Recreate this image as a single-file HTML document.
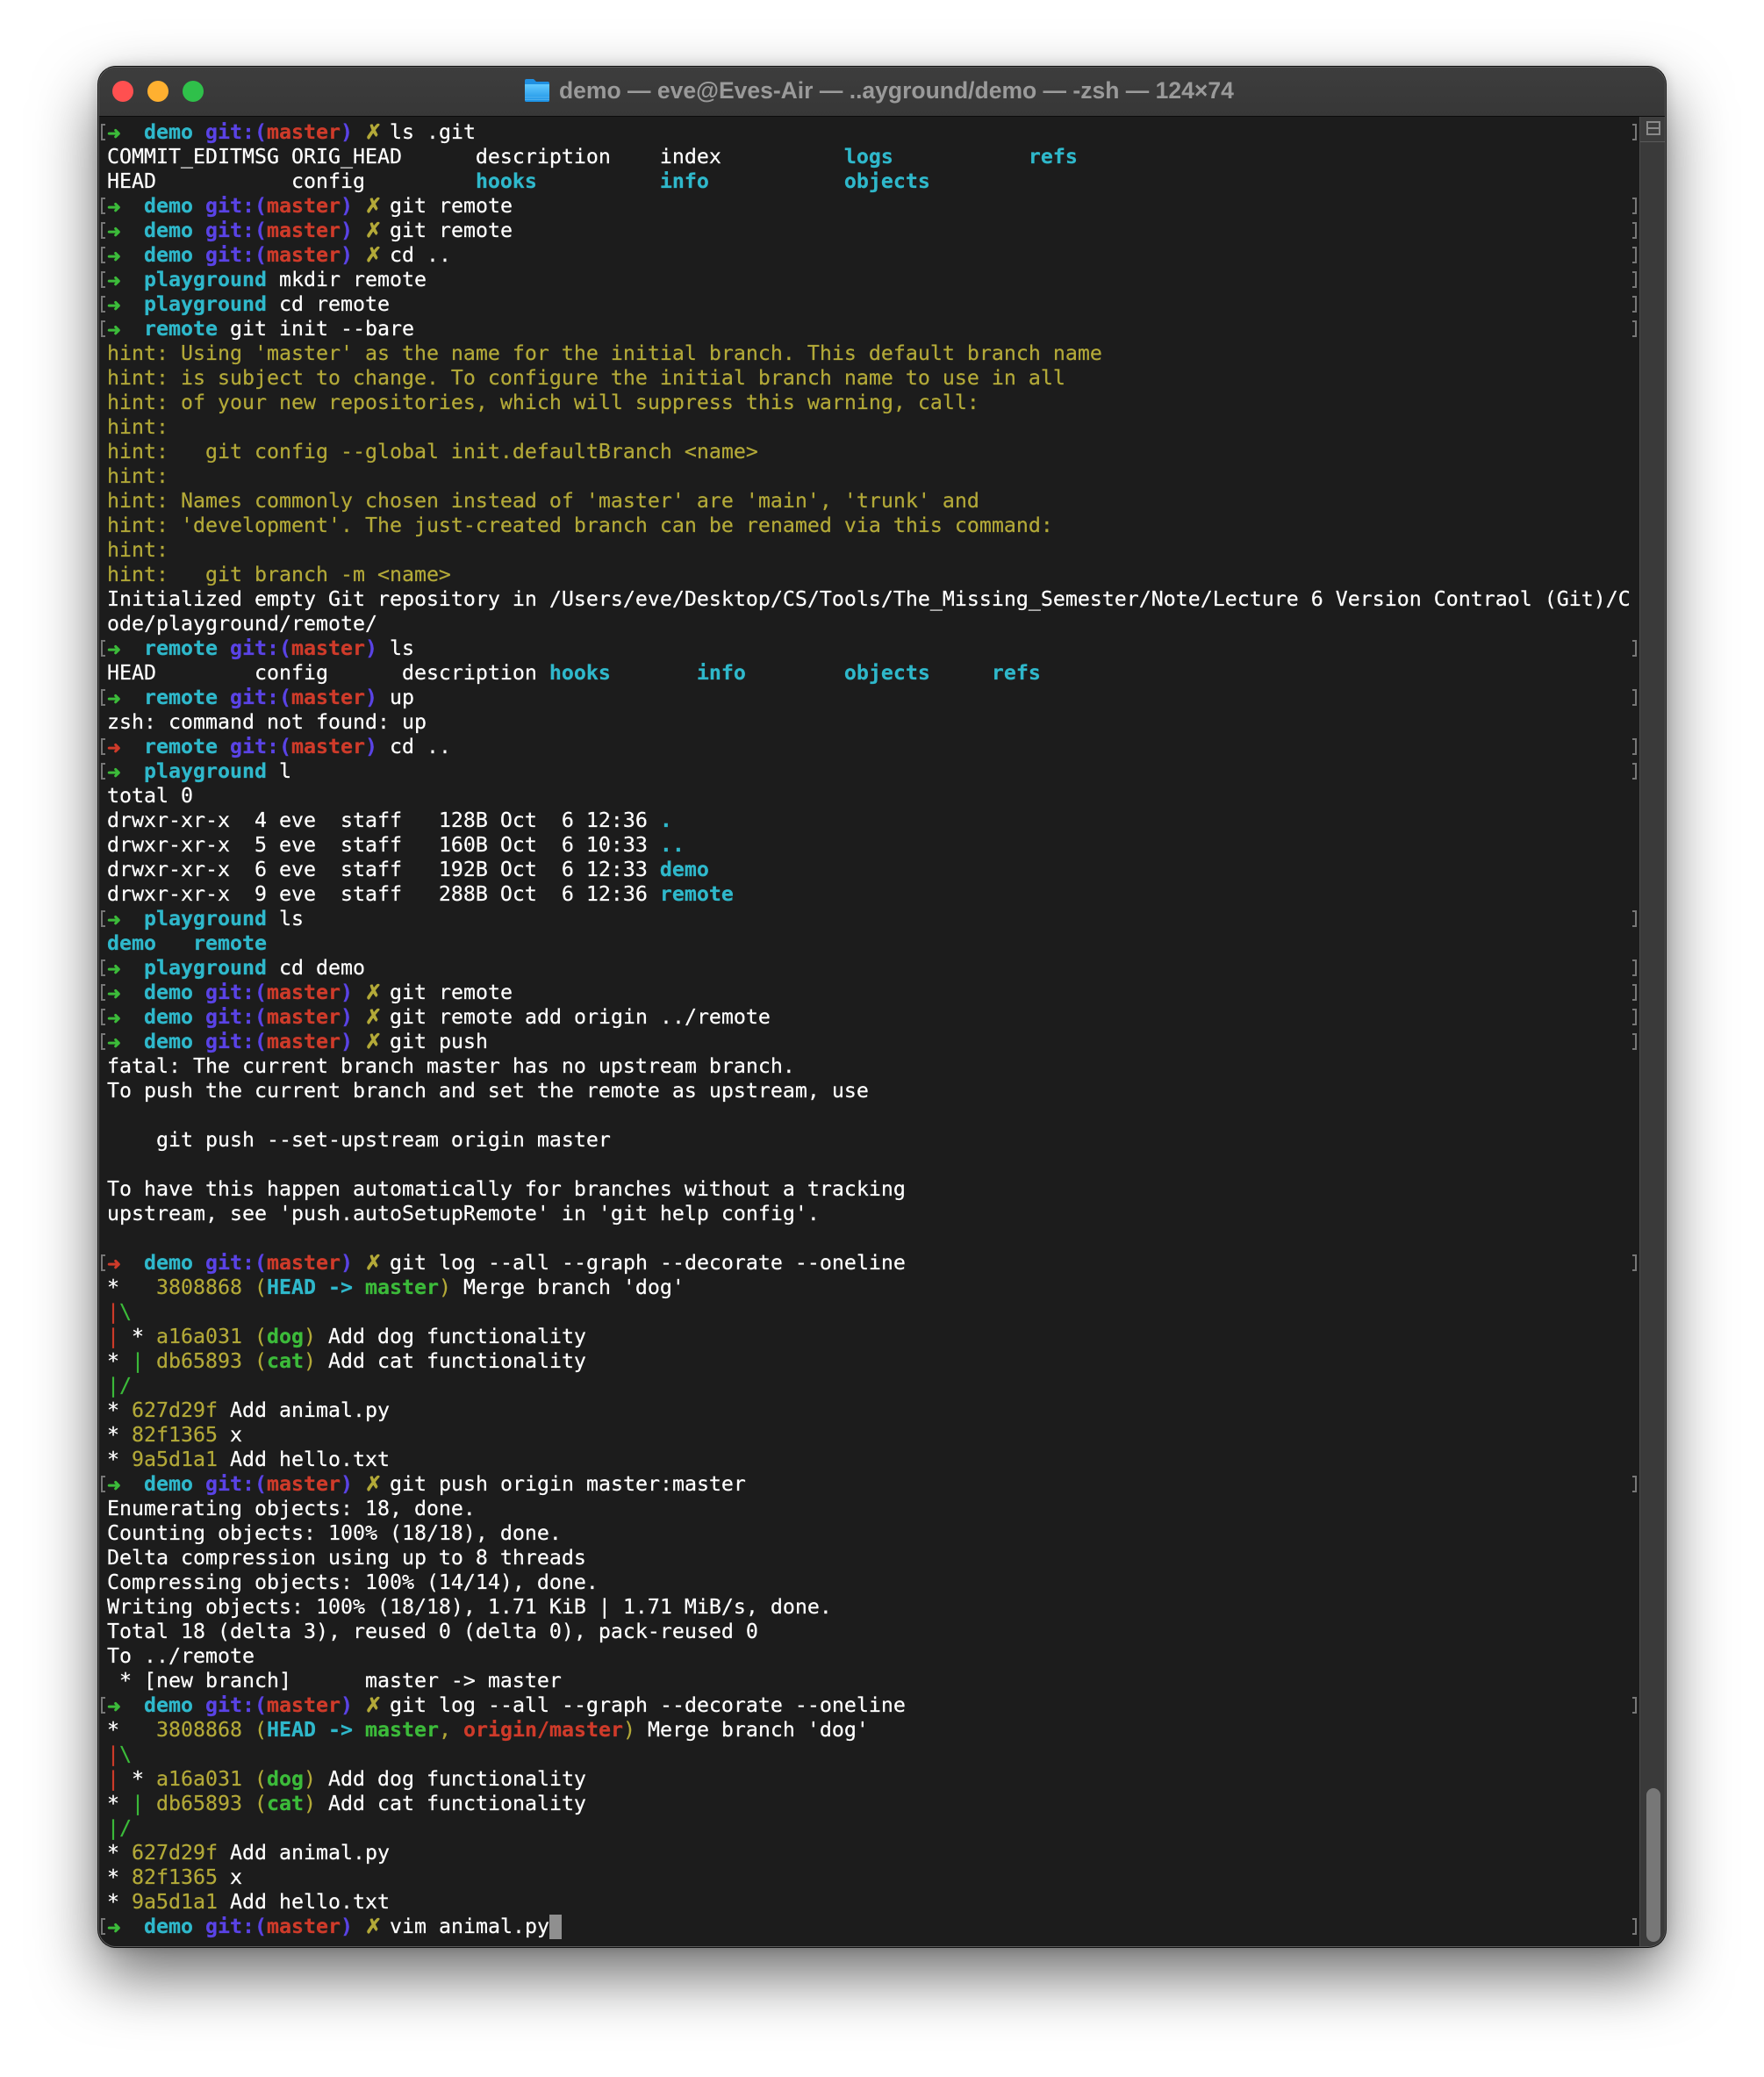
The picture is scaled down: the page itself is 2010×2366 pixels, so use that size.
<!DOCTYPE html>
<html>
<head>
<meta charset="utf-8">
<style>
html,body{margin:0;padding:0;width:2010px;height:2366px;background:#fff;overflow:hidden}
#win{position:absolute;left:112px;top:76px;width:1786px;height:2142px;box-sizing:border-box;border-radius:20px;background:#1c1c1c;box-shadow:0 0 0 1px #111,0 32px 72px rgba(0,0,0,.58),0 0 14px rgba(0,0,0,.18);overflow:hidden;border:1px solid #5a5a5a}
#bar{position:absolute;left:0;top:0;right:0;height:55px;background:linear-gradient(#3d3d3d,#373737);border-bottom:1px solid #0c0c0c}
.dot{position:absolute;top:15px;width:24px;height:24px;border-radius:50%}
#title{position:absolute;left:524px;top:8px;font:bold 26.5px/36px "Liberation Sans",sans-serif;color:#9a9a9a;white-space:pre}
#folder{position:absolute;left:484px;top:12px}
#side{position:absolute;left:1755px;top:56px;width:31px;bottom:0;background:#3a3a3a;border-left:1px solid #4b4b4b}
#sidebox{position:absolute;left:0;top:0;right:0;height:28px;border-bottom:1px solid #5a5a5a;background:#3d3d3d}
#sideicon{position:absolute;left:7px;top:5px;width:12px;height:12px;border:2px solid #8a8a8a;background:linear-gradient(#3d3d3d 5px,#8a8a8a 5px,#8a8a8a 7px,#3d3d3d 7px)}
#thumb{position:absolute;left:7px;top:1904px;width:16px;height:175px;border-radius:8px;background:#777}
#t{position:absolute;left:9px;top:60px;font-family:"DejaVu Sans Mono","Liberation Mono",monospace;font-size:23.26px;line-height:28px;color:#fff;-webkit-text-stroke-width:.2px}
.l{position:relative;height:28px;width:1736px;white-space:pre}
.p::before{content:"";position:absolute;left:-7px;top:4px;width:3px;height:15px;border:2px solid #777;border-right:0}
.p::after{content:"";position:absolute;left:1738px;top:4px;width:3px;height:15px;border:2px solid #777;border-left:0}
b{font-weight:bold}
.c{color:#2fb8cb}
.u{color:#5a43e6}
.r{color:#cf3b2a}
.g{color:#3cbb3a}
.y{color:#b3a938}
.a{display:inline-block;width:14px;font-size:19px;font-family:"DejaVu Sans","DejaVu Sans Mono",sans-serif;overflow:visible;-webkit-text-stroke-width:.7px}
.x{display:inline-block;width:14px;font-size:23px;font-family:"DejaVu Sans","DejaVu Sans Mono",sans-serif;-webkit-text-stroke-width:.9px}
#cur{display:inline-block;width:14px;height:28px;background:#8f8f8f;vertical-align:top}
</style>
</head>
<body>
<div id="win">
<div id="bar">
<div class="dot" style="left:15px;background:#ff5050"></div>
<div class="dot" style="left:55px;background:#ffb030"></div>
<div class="dot" style="left:95px;background:#2fc04a"></div>
<svg id="folder" width="30" height="28" viewBox="0 0 30 28"><defs><linearGradient id="f" x1="0" y1="0" x2="0" y2="1"><stop offset="0" stop-color="#62caff"/><stop offset="1" stop-color="#1a90e4"/></linearGradient></defs><path d="M1 3a2 2 0 0 1 2-2h8l3 3h13a2 2 0 0 1 2 2v19a2 2 0 0 1-2 2H3a2 2 0 0 1-2-2z" fill="#1f8fe0"/><path d="M1 7h28v18a2 2 0 0 1-2 2H3a2 2 0 0 1-2-2z" fill="url(#f)"/><path d="M1 22h28M1 24.500h28" stroke="#7fcbf5" stroke-opacity=".45" stroke-width="1"/></svg>
<div id="title">demo — eve@Eves-Air — ..ayground/demo — -zsh — 124×74</div>
</div>
<div id="t">
<div class="l p"><b class="g a">➜</b>  <b class="c">demo</b> <b class="u">git:(</b><b class="r">master</b><b class="u">)</b> <b class="y x">✗</b> ls .git</div>
<div class="l">COMMIT_EDITMSG ORIG_HEAD      description    index          <b class="c">logs</b>           <b class="c">refs</b></div>
<div class="l">HEAD           config         <b class="c">hooks</b>          <b class="c">info</b>           <b class="c">objects</b></div>
<div class="l p"><b class="g a">➜</b>  <b class="c">demo</b> <b class="u">git:(</b><b class="r">master</b><b class="u">)</b> <b class="y x">✗</b> git remote</div>
<div class="l p"><b class="g a">➜</b>  <b class="c">demo</b> <b class="u">git:(</b><b class="r">master</b><b class="u">)</b> <b class="y x">✗</b> git remote</div>
<div class="l p"><b class="g a">➜</b>  <b class="c">demo</b> <b class="u">git:(</b><b class="r">master</b><b class="u">)</b> <b class="y x">✗</b> cd ..</div>
<div class="l p"><b class="g a">➜</b>  <b class="c">playground</b> mkdir remote</div>
<div class="l p"><b class="g a">➜</b>  <b class="c">playground</b> cd remote</div>
<div class="l p"><b class="g a">➜</b>  <b class="c">remote</b> git init --bare</div>
<div class="l y">hint: Using 'master' as the name for the initial branch. This default branch name</div>
<div class="l y">hint: is subject to change. To configure the initial branch name to use in all</div>
<div class="l y">hint: of your new repositories, which will suppress this warning, call:</div>
<div class="l y">hint:</div>
<div class="l y">hint:   git config --global init.defaultBranch &lt;name&gt;</div>
<div class="l y">hint:</div>
<div class="l y">hint: Names commonly chosen instead of 'master' are 'main', 'trunk' and</div>
<div class="l y">hint: 'development'. The just-created branch can be renamed via this command:</div>
<div class="l y">hint:</div>
<div class="l y">hint:   git branch -m &lt;name&gt;</div>
<div class="l">Initialized empty Git repository in /Users/eve/Desktop/CS/Tools/The_Missing_Semester/Note/Lecture 6 Version Contraol (Git)/C</div>
<div class="l">ode/playground/remote/</div>
<div class="l p"><b class="g a">➜</b>  <b class="c">remote</b> <b class="u">git:(</b><b class="r">master</b><b class="u">)</b> ls</div>
<div class="l">HEAD        config      description <b class="c">hooks</b>       <b class="c">info</b>        <b class="c">objects</b>     <b class="c">refs</b></div>
<div class="l p"><b class="g a">➜</b>  <b class="c">remote</b> <b class="u">git:(</b><b class="r">master</b><b class="u">)</b> up</div>
<div class="l">zsh: command not found: up</div>
<div class="l p"><b class="r a">➜</b>  <b class="c">remote</b> <b class="u">git:(</b><b class="r">master</b><b class="u">)</b> cd ..</div>
<div class="l p"><b class="g a">➜</b>  <b class="c">playground</b> l</div>
<div class="l">total 0</div>
<div class="l">drwxr-xr-x  4 eve  staff   128B Oct  6 12:36 <b class="c">.</b></div>
<div class="l">drwxr-xr-x  5 eve  staff   160B Oct  6 10:33 <b class="c">..</b></div>
<div class="l">drwxr-xr-x  6 eve  staff   192B Oct  6 12:33 <b class="c">demo</b></div>
<div class="l">drwxr-xr-x  9 eve  staff   288B Oct  6 12:36 <b class="c">remote</b></div>
<div class="l p"><b class="g a">➜</b>  <b class="c">playground</b> ls</div>
<div class="l"><b class="c">demo</b>   <b class="c">remote</b></div>
<div class="l p"><b class="g a">➜</b>  <b class="c">playground</b> cd demo</div>
<div class="l p"><b class="g a">➜</b>  <b class="c">demo</b> <b class="u">git:(</b><b class="r">master</b><b class="u">)</b> <b class="y x">✗</b> git remote</div>
<div class="l p"><b class="g a">➜</b>  <b class="c">demo</b> <b class="u">git:(</b><b class="r">master</b><b class="u">)</b> <b class="y x">✗</b> git remote add origin ../remote</div>
<div class="l p"><b class="g a">➜</b>  <b class="c">demo</b> <b class="u">git:(</b><b class="r">master</b><b class="u">)</b> <b class="y x">✗</b> git push</div>
<div class="l">fatal: The current branch master has no upstream branch.</div>
<div class="l">To push the current branch and set the remote as upstream, use</div>
<div class="l"></div>
<div class="l">    git push --set-upstream origin master</div>
<div class="l"></div>
<div class="l">To have this happen automatically for branches without a tracking</div>
<div class="l">upstream, see 'push.autoSetupRemote' in 'git help config'.</div>
<div class="l"></div>
<div class="l p"><b class="r a">➜</b>  <b class="c">demo</b> <b class="u">git:(</b><b class="r">master</b><b class="u">)</b> <b class="y x">✗</b> git log --all --graph --decorate --oneline</div>
<div class="l">*   <span class="y">3808868 (</span><b class="c">HEAD -&gt; </b><b class="g">master</b><span class="y">)</span> Merge branch 'dog'</div>
<div class="l"><span class="r">|</span><span class="g">\</span></div>
<div class="l"><span class="r">|</span> * <span class="y">a16a031 (</span><b class="g">dog</b><span class="y">)</span> Add dog functionality</div>
<div class="l">* <span class="g">|</span> <span class="y">db65893 (</span><b class="g">cat</b><span class="y">)</span> Add cat functionality</div>
<div class="l"><span class="g">|/</span></div>
<div class="l">* <span class="y">627d29f</span> Add animal.py</div>
<div class="l">* <span class="y">82f1365</span> x</div>
<div class="l">* <span class="y">9a5d1a1</span> Add hello.txt</div>
<div class="l p"><b class="g a">➜</b>  <b class="c">demo</b> <b class="u">git:(</b><b class="r">master</b><b class="u">)</b> <b class="y x">✗</b> git push origin master:master</div>
<div class="l">Enumerating objects: 18, done.</div>
<div class="l">Counting objects: 100% (18/18), done.</div>
<div class="l">Delta compression using up to 8 threads</div>
<div class="l">Compressing objects: 100% (14/14), done.</div>
<div class="l">Writing objects: 100% (18/18), 1.71 KiB | 1.71 MiB/s, done.</div>
<div class="l">Total 18 (delta 3), reused 0 (delta 0), pack-reused 0</div>
<div class="l">To ../remote</div>
<div class="l"> * [new branch]      master -&gt; master</div>
<div class="l p"><b class="g a">➜</b>  <b class="c">demo</b> <b class="u">git:(</b><b class="r">master</b><b class="u">)</b> <b class="y x">✗</b> git log --all --graph --decorate --oneline</div>
<div class="l">*   <span class="y">3808868 (</span><b class="c">HEAD -&gt; </b><b class="g">master</b><span class="y">, </span><b class="r">origin/master</b><span class="y">)</span> Merge branch 'dog'</div>
<div class="l"><span class="r">|</span><span class="g">\</span></div>
<div class="l"><span class="r">|</span> * <span class="y">a16a031 (</span><b class="g">dog</b><span class="y">)</span> Add dog functionality</div>
<div class="l">* <span class="g">|</span> <span class="y">db65893 (</span><b class="g">cat</b><span class="y">)</span> Add cat functionality</div>
<div class="l"><span class="g">|/</span></div>
<div class="l">* <span class="y">627d29f</span> Add animal.py</div>
<div class="l">* <span class="y">82f1365</span> x</div>
<div class="l">* <span class="y">9a5d1a1</span> Add hello.txt</div>
<div class="l p"><b class="g a">➜</b>  <b class="c">demo</b> <b class="u">git:(</b><b class="r">master</b><b class="u">)</b> <b class="y x">✗</b> vim animal.py<span id="cur"></span></div>
</div>
<div id="side"><div id="sidebox"><div id="sideicon"></div></div><div id="thumb"></div></div>
</div>
</body>
</html>
